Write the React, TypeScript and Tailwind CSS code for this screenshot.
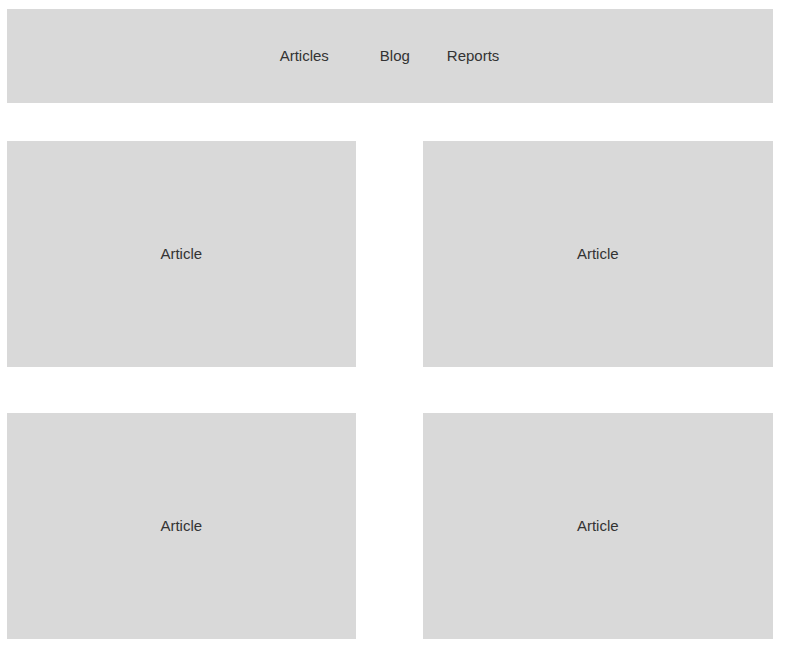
import React from 'react';

const Card: React.FC = () => (
  <div className="h-[226px] pt-[2px] bg-[#d9d9d9] flex items-center justify-center text-[15px] text-[#333333]">
    Article
  </div>
);

export default function App() {
  return (
    <div
      className="w-[788px] h-[654px] bg-white pl-[6.5px] pr-[15.5px] pt-[9px]"
      style={{ fontFamily: '"Liberation Sans", Arial, sans-serif' }}
    >
      {/* Nav bar */}
      <div className="h-[93.5px] bg-[#d9d9d9] flex items-center justify-center text-[15px] text-[#333333]">
        <span>Articles</span>
        <span className="ml-[51px]">Blog</span>
        <span className="ml-[37px]">Reports</span>
      </div>

      {/* Articles grid */}
      <div className="mt-[38px] grid grid-cols-[349.5px_349.5px] gap-x-[67px] gap-y-[46px]">
        <Card />
        <Card />
        <Card />
        <Card />
      </div>
    </div>
  );
}
